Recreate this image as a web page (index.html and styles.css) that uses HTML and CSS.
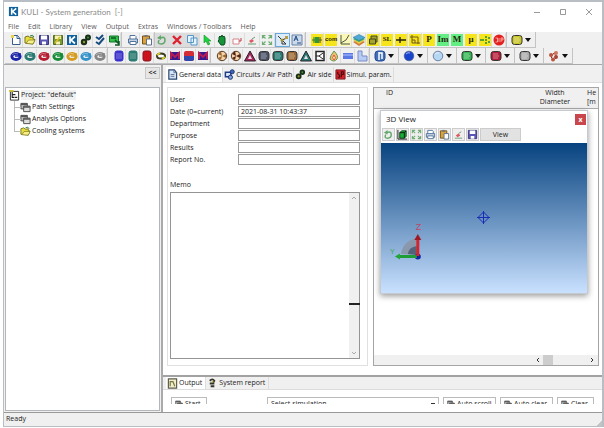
FILE: index.html
```html
<!DOCTYPE html>
<html lang="en">
<head>
<meta charset="utf-8">
<title>KULI - System generation</title>
<link rel="stylesheet" href="styles.css">
</head>
<body>
<svg class="defs" aria-hidden="true">
  <symbol id="logo" viewBox="0 0 12 12"><path fill="#10609c" d="M1 1h10v10H1z"/><path d="M4 2.500v7M9 2.500 5 6l4 3.500" fill="none" stroke="#fff" stroke-width="1.700"/></symbol>
  <symbol id="new" viewBox="0 0 12 12"><path d="M2.500 1.500h5l2.500 3v6H2.500z" fill="#fff" stroke="#345e8c"/><path d="M7 1.500v3h3" fill="none" stroke="#345e8c"/><path d="M1 1h3v3H1z" fill="#e8d34a"/></symbol>
  <symbol id="open" viewBox="0 0 12 12"><path d="M1 9V3l3-1 2 1.500 3-.5v2l2 .5L9 10z" fill="#e9df3c" stroke="#77741c"/><path d="M2 9.500 4.500 6H11L9 10z" fill="#f7f08a" stroke="#77741c" stroke-width=".7"/><path d="M6 2q3-2 4 1" stroke="#27823a" fill="none"/></symbol>
  <symbol id="save" viewBox="0 0 12 12"><path d="M1.500 1.500h9v9h-9z" fill="#5b55b4" stroke="#38367a"/><path d="M3 1.500h6v4H3zM4 7.500h4v3H4z" fill="#fff"/></symbol>
  <symbol id="saveas" viewBox="0 0 12 12"><path d="M1.500 1.500h9v9h-9z" fill="#7c9a35" stroke="#536a25"/><path d="M3 1.500h6v3.500H3zM4 7.500h4v3H4z" fill="#f4f3b5"/><path d="m3 9 5-6" stroke="#d9bf27" stroke-width="1.500"/></symbol>
  <symbol id="gears" viewBox="0 0 12 12"><circle cx="4" cy="8" r="2.200" fill="#849b22" stroke="#1d2c18" stroke-width="2"/><circle cx="8" cy="3.500" r="2" fill="#4b8c3c" stroke="#173018" stroke-width="2"/></symbol>
  <symbol id="check" viewBox="0 0 12 12"><path d="m2 3 3 2 4-4M2 8l3 2 5-6" fill="none" stroke="#164b80" stroke-width="2"/></symbol>
  <symbol id="run" viewBox="0 0 12 12"><path d="M1.500 2h9v6h-9z" fill="#35c04c" stroke="#12752a"/><path d="M3 4h5M7 6l4 4M11 7v4H7" fill="none" stroke="#085920" stroke-width="1.500"/></symbol>
  <symbol id="print" viewBox="0 0 12 12"><path d="M3 5V1.500h5l1 1V5" fill="#fff" stroke="#52749c"/><path d="M1.500 5h9v4h-9z" fill="#c5d2e2" stroke="#52749c"/><path d="M3 7.500h6v3H3z" fill="#fff" stroke="#52749c"/></symbol>
  <symbol id="paste" viewBox="0 0 12 12"><path d="M1.500 2h7v8h-7z" fill="#d8a33c" stroke="#78531b"/><path d="M3.500 1h3v2h-3z" fill="#777"/><path d="M5.500 5h5v6h-5z" fill="#fff" stroke="#5b718b"/></symbol>
  <symbol id="undo" viewBox="0 0 12 12"><path d="M4 4q5-2 5 2t-4 4-2-4" fill="none" stroke="#62a76c" stroke-width="1.600"/><path d="M1 4l4-3v5z" fill="#62a76c"/></symbol>
  <symbol id="del" viewBox="0 0 12 12"><path d="m2 2 8 8m0-8-8 8" stroke="#db2332" stroke-width="2.400"/></symbol>
  <symbol id="copy" viewBox="0 0 12 12"><path d="M1.500 1.500h6v7h-6zM5 4h6v7H5z" fill="#e6f4ff" stroke="#5797c6"/></symbol>
  <symbol id="arrow" viewBox="0 0 12 12"><path d="M3 1v8l2-2 2 4 2-1-2-3h3z" fill="#1bd33c" stroke="#15902c" stroke-width=".6"/></symbol>
  <symbol id="hand" viewBox="0 0 12 12"><path d="M3 6V3l1-1 1 1 1-2 1 2 1-1 1 2v5L8 11H5L2 7z" fill="#16933b" stroke="#08501d"/></symbol>
  <symbol id="zoom" viewBox="0 0 12 12"><path d="M2 5h6v5H2z" fill="#fff" stroke="#d6858c"/><path d="M8 7h2V4" fill="none" stroke="#bf3d47"/></symbol>
  <symbol id="erase" viewBox="0 0 12 12"><path d="m3 7 3-2 2 2-3 2z" fill="#de5960"/><path d="m6 5 3-2M2 10h8" stroke="#6b9c70"/></symbol>
  <symbol id="fit" viewBox="0 0 12 12"><path d="M1.500 4.500v-3h3m3 0h3v3m0 3v3h-3m-3 0h-3v-3M2 2l2.500 2.500M10 2 7.500 4.500M10 10 7.500 7.500M2 10l2.500-2.500" fill="none" stroke="#6fae73" stroke-width="1.200"/></symbol>
  <symbol id="net" viewBox="0 0 12 12"><path d="M0 0h12v12H0z" fill="#dcecf8"/><path d="m1 2 4 4 5-2M5 6l4 4H5z" fill="none" stroke="#333"/><circle cx="5" cy="6" r="1.500" fill="#a89026"/><path d="M8 2h3v3H8z" fill="#ba9c45"/></symbol>
  <symbol id="text" viewBox="0 0 12 12"><path d="M1 1h10v10H1z" fill="#cbd9ea" stroke="#6482a6"/><path d="m3 7 2-5 2 5M4 5h2M6 9h4" fill="none" stroke="#234e84"/></symbol>
  <symbol id="sig" viewBox="0 0 12 12"><path d="M0 0h12v12H0z" fill="#f6e51d"/><path d="M1 6h10M3 3v6" stroke="#34762d"/><path d="M4 3h4v6H4z" fill="#2b9938"/><path d="M9 3v6" stroke="#7b341b"/></symbol>
  <symbol id="graph" viewBox="0 0 12 12"><path d="M0 0h12v12H0z" fill="#fbf8b7"/><path d="M2 1v9h9M2 9q6-2 8-8" fill="none" stroke="#4b5741"/></symbol>
  <symbol id="layers" viewBox="0 0 12 12"><path d="m0 8 6 4 6-4-6-3z" fill="#d6793f"/><path d="m0 6 6 4 6-4-6-3z" fill="#e5ce3f"/><path d="m0 5 6 3 6-3-6-3z" fill="#3ba977"/><path d="m0 3.500 6 3 6-3L6 .5z" fill="#53a9d6" stroke="#287f9c" stroke-width=".6"/></symbol>
  <symbol id="box" viewBox="0 0 12 12"><path d="M0 0h12v12H0z" fill="#f6e51d"/><path d="M2.500 5h6v5h-6zM4 5V2h6v6H8" fill="#a9a32d" stroke="#3e4a26"/></symbol>
  <symbol id="plus" viewBox="0 0 12 12"><path d="M0 0h12v12H0z" fill="#f6e51d"/><path d="M1 6h10M5 3v6" stroke="#25230a" stroke-width="1.400"/></symbol>
  <symbol id="axes" viewBox="0 0 12 12"><path d="M0 0h12v12H0z" fill="#f6e51d"/><path d="M3 1v8h8M1 3h8v7M3 6h3v3" fill="none" stroke="#72581b"/></symbol>
  <symbol id="split" viewBox="0 0 12 12"><path d="M0 0h12v12H0z" fill="#f6e51d"/><path d="M1 6h4M7 2v2M7 5v2M7 8v2M10 3v2M10 7v2" stroke="#258e32" stroke-width="1.500"/></symbol>
  <symbol id="stop" viewBox="0 0 12 12"><circle cx="6" cy="6" r="5.500" fill="#e32020"/><path d="M2.500 4h2v4h-2M6 4v4M8 8V4h2v2H8" fill="none" stroke="#ffc1b5" stroke-width=".8"/></symbol>
  <symbol id="chip" viewBox="0 0 12 12"><rect x="1" y="1.500" width="10" height="9" rx="2.500" fill="currentColor" stroke="#373432"/><path d="M3 4h5M3 6h6M3 8h5" stroke="#fff" stroke-opacity=".45"/></symbol>
  <symbol id="blob" viewBox="0 0 12 12"><rect x="2" y="1" width="8" height="10" rx="2" fill="currentColor" stroke="currentColor"/><path d="M3 4h6M3 6h6M3 8h6" stroke="#fff" stroke-opacity=".35"/></symbol>
  <symbol id="solid" viewBox="0 0 12 12"><rect x="2" y="1" width="8" height="10" rx="2" fill="#cc141c" stroke="#84141c"/></symbol>
  <symbol id="ring" viewBox="0 0 12 12"><ellipse cx="6" cy="6.500" rx="4.200" ry="3" fill="#eee" stroke="currentColor" stroke-width="2.800"/><path d="M5 6h5V3" fill="none" stroke="currentColor" stroke-width="1.500"/><path d="M2 5q2-3 6-1" fill="none" stroke="#fff" stroke-opacity=".5" stroke-width=".8"/></symbol>
  <symbol id="loop" viewBox="0 0 12 12"><ellipse cx="6" cy="6" rx="4" ry="2.500" fill="#fff" stroke="#3a3926" stroke-width="2"/><path d="M2 5 5 3M7 9l3-2" stroke="#d9cb28" stroke-width="2"/></symbol>
  <symbol id="wave" viewBox="0 0 12 12"><path d="M1 2h10v8H1z" fill="#391a8a"/><path d="M2 9V3l4 4 4-4v6" fill="none" stroke="#bd1c53" stroke-width="1.800"/></symbol>
  <symbol id="bicolor" viewBox="0 0 12 12"><rect x="1" y="1" width="10" height="10" rx="2" fill="#d32b38"/><path d="M1 6h10v4l-2 1H3l-2-1z" fill="#3048ae"/></symbol>
  <symbol id="fan" viewBox="0 0 12 12"><circle cx="6" cy="6" r="4.700" fill="#f1d4a8" stroke="#553622"/><path d="M6 6 2 4l3-3zM6 6l4-2v4zM6 6l-1 4-3-2z" fill="currentColor"/></symbol>
  <symbol id="tri" viewBox="0 0 12 12"><path d="m6 1 5.500 10H.5z" fill="currentColor" stroke="#28202a"/><path d="m6 5 2 4H4z" fill="#eadde5"/></symbol>
  <symbol id="valve" viewBox="0 0 12 12"><path d="M2 1.500h8v9H2z" fill="#fff" stroke="#252525" stroke-width="1.500"/><path d="M2 6h3l4-3M5 6l4 3" fill="none" stroke="#252525"/></symbol>
  <symbol id="flame" viewBox="0 0 12 12"><path d="M6 1q5 5 3 8-3 4-7 0 0-3 4-8z" fill="#efbf76" stroke="#649950"/><path d="M6 5q3 3 0 5-3-2 0-5z" fill="#fff4b1" stroke="#dc5538"/></symbol>
  <symbol id="bar" viewBox="0 0 12 12"><path d="M1 3h10v6H1z" fill="#5b79e6"/><path d="M1 5h10" stroke="#b3c6ff"/></symbol>
  <symbol id="ell" viewBox="0 0 12 12"><path d="M2 1h4v5h5v5H2z" fill="#b8ccf6" stroke="#778cc1"/></symbol>
  <symbol id="pipe" viewBox="0 0 12 12"><rect x="1" y="1" width="10" height="10" rx="3" fill="#416fba" stroke="#244b91"/><path d="M5 2v8M5 3h3v6" stroke="#fff" fill="none" stroke-width="1.500"/></symbol>
  <symbol id="ball" viewBox="0 0 12 12"><circle cx="6" cy="6" r="4.800" fill="currentColor" stroke="#485c83" stroke-width=".7"/><path d="M3 4q2-2 4-1" fill="none" stroke="#fff" stroke-opacity=".6"/></symbol>
  <symbol id="cluster" viewBox="0 0 12 12"><path d="M3 7 6 3l3 4-3 3zM6 3l3-1" fill="none" stroke="#8e3326"/><circle cx="3" cy="5" r="2" fill="#bd563f"/><circle cx="8" cy="3" r="2" fill="#d17860"/><circle cx="8" cy="7" r="2" fill="#a54738"/><circle cx="5" cy="9.500" r="2" fill="#bd563f"/></symbol>
  <symbol id="page" viewBox="0 0 12 12"><path d="M2 1h6l2.500 3v7H2z" fill="#d9e5f4" stroke="#29466f" stroke-width="1.300"/><path d="M7.500 1v3h3M4 6h4M4 8h4" fill="none" stroke="#536f98"/></symbol>
  <symbol id="circuits" viewBox="0 0 12 12"><path d="M1.500 3.500h6v5h-6z" fill="#d7e7ff" stroke="#203c84" stroke-width="1.600"/><circle cx="9" cy="3" r="2.200" fill="#4265ba" stroke="#152e73"/><circle cx="7" cy="9" r="2.300" fill="#7f99d5" stroke="#152e73"/></symbol>
  <symbol id="sim" viewBox="0 0 12 12"><path d="M1 1h10v10H1z" fill="#d6212a" stroke="#7c1d22"/><path d="M3 3v2l2 2v2H3M7 9V3h2v3H7" fill="none" stroke="#4a0d10" stroke-width="1.300"/></symbol>
  <symbol id="project" viewBox="0 0 12 12"><path d="M1.500 1.500h9v9.500h-9z" fill="#fff" stroke="#222"/><path d="M3.500 2v6h2M4 5h3M6 8h3" stroke="#222" fill="none" stroke-width="1.200"/><path d="M0 0h5v2H0z" fill="#d8c536"/></symbol>
  <symbol id="windows" viewBox="0 0 12 12"><path d="M1 1.500h7v6H1z" fill="#bbb" stroke="#454545"/><path d="M4 4.500h7v6H4z" fill="#ddd" stroke="#454545"/><path d="M4 5.500h7M1 2.500h7" stroke="#555" stroke-width="1.500"/></symbol>
  <symbol id="report" viewBox="0 0 12 12"><path d="M3 3q3-3 5 0L6 6M4 9h4M3 6h5" fill="none" stroke="#34342c" stroke-width="2"/><path d="M5 4h2" stroke="#c4b956" stroke-width="2"/></symbol>
  <symbol id="out" viewBox="0 0 12 12"><path d="M1.500 1h9v10h-9z" fill="#f1edcb" stroke="#5d5d4f" stroke-width="1.300"/><path d="M3.500 9V4h3l2 5" fill="none" stroke="#777945" stroke-width="1.300"/></symbol>
  <symbol id="cube" viewBox="0 0 12 12"><path d="m3 4 2-2h5v6L8 10H3z" fill="#19ae36" stroke="#063b14"/><path d="M3 4h5v6M8 4l2-2M1 1v10h10" fill="none" stroke="#111"/></symbol>
</svg>

<div class="window">
  <header class="titlebar">
    <svg class="icon"><use href="#logo"/></svg>
    <h1>KULI - System generation&nbsp; [-]</h1>
    <div class="captions">
      <button type="button" aria-label="Minimize"><svg viewBox="0 0 8 8"><path d="M1 4.500h6"/></svg></button>
      <button type="button" aria-label="Maximize"><svg viewBox="0 0 8 8"><path d="M1.500 1.500h5v5h-5z"/></svg></button>
      <button type="button" aria-label="Close"><svg viewBox="0 0 8 8"><path d="m1 1 6 6m0-6L1 7"/></svg></button>
    </div>
  </header>
  <nav class="menubar">
    <button type="button">File</button><button type="button">Edit</button><button type="button">Library</button><button type="button">View</button><button type="button">Output</button><button type="button">Extras</button><button type="button">Windows / Toolbars</button><button type="button">Help</button>
  </nav>

  <div class="toolbars">
    <div class="toolrow">
      <div class="group">
        <button type="button" aria-label="New"><svg><use href="#new"/></svg></button>
        <button type="button" aria-label="Open"><svg><use href="#open"/></svg></button>
        <button type="button" aria-label="Save"><svg><use href="#save"/></svg></button>
        <button type="button" aria-label="Save as"><svg><use href="#saveas"/></svg></button>
        <button type="button" aria-label="KULI"><svg><use href="#logo"/></svg></button>
        <button type="button" aria-label="Components"><svg><use href="#gears"/></svg></button>
        <button type="button" aria-label="Check"><svg><use href="#check"/></svg></button>
        <button type="button" aria-label="Run"><svg><use href="#run"/></svg></button>
      </div>
      <div class="group">
        <button type="button" aria-label="Print"><svg><use href="#print"/></svg></button>
        <button type="button" aria-label="Paste"><svg><use href="#paste"/></svg></button>
      </div>
      <div class="group wide">
        <button type="button" aria-label="Undo" class="off"><svg><use href="#undo"/></svg></button>
        <button type="button" aria-label="Delete" class="off"><svg><use href="#del"/></svg></button>
        <button type="button" aria-label="Copy" class="off"><svg><use href="#copy"/></svg></button>
        <button type="button" aria-label="Select"><svg><use href="#arrow"/></svg></button>
        <button type="button" aria-label="Pan"><svg><use href="#hand"/></svg></button>
        <button type="button" aria-label="Zoom"><svg><use href="#zoom"/></svg></button>
        <button type="button" aria-label="Erase"><svg><use href="#erase"/></svg></button>
        <button type="button" aria-label="Fit"><svg><use href="#fit"/></svg></button>
        <button type="button" aria-label="Network" class="active"><svg><use href="#net"/></svg></button>
        <button type="button" aria-label="Text"><svg><use href="#text"/></svg></button>
      </div>
      <div class="group">
        <button type="button" aria-label="Signal"><svg><use href="#sig"/></svg></button>
        <button type="button" class="tag mono">com</button>
        <button type="button" aria-label="Graph"><svg><use href="#graph"/></svg></button>
        <button type="button" aria-label="Layers"><svg><use href="#layers"/></svg></button>
        <button type="button" aria-label="Box"><svg><use href="#box"/></svg></button>
        <button type="button" class="tag small">SL</button>
        <button type="button" aria-label="Add"><svg><use href="#plus"/></svg></button>
        <button type="button" aria-label="Axes"><svg><use href="#axes"/></svg></button>
        <button type="button" class="tag">P</button>
        <button type="button" class="tag green">Im</button>
        <button type="button" class="tag green">M</button>
        <button type="button" class="tag">μ</button>
        <button type="button" aria-label="Split"><svg><use href="#split"/></svg></button>
        <button type="button" aria-label="Stop"><svg><use href="#stop"/></svg></button>
      </div>
      <div class="group"><button type="button" aria-label="Control" class="drop c-yellow"><svg><use href="#chip"/></svg></button></div>
    </div>
    <div class="toolrow">
      <div class="group">
        <button type="button" aria-label="Blue circuit" class="c-blue"><svg><use href="#ring"/></svg></button>
        <button type="button" aria-label="Teal circuit" class="c-teal"><svg><use href="#ring"/></svg></button>
        <button type="button" aria-label="Red circuit" class="c-red"><svg><use href="#ring"/></svg></button>
        <button type="button" aria-label="Green circuit" class="c-green"><svg><use href="#ring"/></svg></button>
        <button type="button" aria-label="Orange circuit" class="c-orange"><svg><use href="#ring"/></svg></button>
        <button type="button" aria-label="Sky circuit" class="c-sky"><svg><use href="#ring"/></svg></button>
        <button type="button" aria-label="Gray circuit" class="c-gray"><svg><use href="#ring"/></svg></button>
      </div>
      <div class="group">
        <button type="button" aria-label="Radiator" class="c-violet"><svg><use href="#blob"/></svg></button>
        <button type="button" aria-label="Cooler" class="c-teal"><svg><use href="#blob"/></svg></button>
        <button type="button" aria-label="Heater"><svg><use href="#solid"/></svg></button>
        <button type="button" aria-label="Loop"><svg><use href="#loop"/></svg></button>
        <button type="button" aria-label="Condenser"><svg><use href="#wave"/></svg></button>
        <button type="button" aria-label="Exchanger"><svg><use href="#bicolor"/></svg></button>
        <button type="button" aria-label="Evaporator"><svg><use href="#wave"/></svg></button>
      </div>
      <div class="group">
        <button type="button" aria-label="Fan" class="c-brown"><svg><use href="#fan"/></svg></button>
        <button type="button" aria-label="Mechanical fan" class="c-dark"><svg><use href="#fan"/></svg></button>
        <button type="button" aria-label="Resistance" class="c-plum"><svg><use href="#tri"/></svg></button>
        <button type="button" aria-label="Block" class="c-slate"><svg><use href="#chip"/></svg></button>
        <button type="button" aria-label="Pump" class="c-teal"><svg><use href="#chip"/></svg></button>
        <button type="button" aria-label="Motor" class="c-brown"><svg><use href="#chip"/></svg></button>
        <button type="button" aria-label="Nozzle" class="c-teal"><svg><use href="#tri"/></svg></button>
        <button type="button" aria-label="Valve"><svg><use href="#valve"/></svg></button>
        <button type="button" aria-label="Burner"><svg><use href="#flame"/></svg></button>
        <button type="button" aria-label="Duct"><svg><use href="#bar"/></svg></button>
        <button type="button" aria-label="Elbow"><svg><use href="#ell"/></svg></button>
      </div>
      <div class="group"><button type="button" aria-label="Pipe" class="drop"><svg><use href="#pipe"/></svg></button></div>
      <div class="group"><button type="button" aria-label="Fluid" class="drop c-royal"><svg><use href="#ball"/></svg></button></div>
      <div class="group"><button type="button" aria-label="Air" class="drop c-pale"><svg><use href="#ball"/></svg></button></div>
      <div class="group"><button type="button" aria-label="Sensor" class="drop c-lime"><svg><use href="#chip"/></svg></button></div>
      <div class="group"><button type="button" aria-label="Engine" class="drop c-crimson"><svg><use href="#chip"/></svg></button></div>
      <div class="group"><button type="button" aria-label="Cabin" class="drop c-silver"><svg><use href="#chip"/></svg></button></div>
      <div class="group"><button type="button" aria-label="Cluster" class="drop"><svg><use href="#cluster"/></svg></button></div>
    </div>
  </div>

  <div class="workspace">
    <aside class="sidebar">
      <div class="sidehead"><button type="button">&lt;&lt;</button></div>
      <div class="tree">
        <div class="node"><svg class="icon"><use href="#project"/></svg><span class="selected">Project: "default"</span></div>
        <ul>
          <li class="node"><svg class="icon"><use href="#windows"/></svg>Path Settings</li>
          <li class="node"><svg class="icon"><use href="#windows"/></svg>Analysis Options</li>
          <li class="node"><svg class="icon"><use href="#open"/></svg>Cooling systems</li>
        </ul>
      </div>
    </aside>

    <main class="main">
      <div class="tabs">
        <button type="button" class="tab current"><svg class="icon"><use href="#page"/></svg>General data</button>
        <button type="button" class="tab"><svg class="icon"><use href="#circuits"/></svg>Circuits / Air Path</button>
        <button type="button" class="tab"><svg class="icon"><use href="#gears"/></svg>Air side</button>
        <button type="button" class="tab"><svg class="icon"><use href="#sim"/></svg>Simul. param.</button>
      </div>
      <div class="panes">
        <form class="general">
          <div class="fields">
            <label for="user">User</label><input id="user" type="text">
            <label for="date">Date (0=current)</label><input id="date" type="text" value="2021-08-31 10:43:37">
            <label for="dept">Department</label><input id="dept" type="text">
            <label for="purpose">Purpose</label><input id="purpose" type="text">
            <label for="results">Results</label><input id="results" type="text">
            <label for="report-no">Report No.</label><input id="report-no" type="text">
          </div>
          <label class="memolabel" for="memo">Memo</label>
          <div class="memo">
            <textarea id="memo"></textarea>
            <div class="vscroll">
              <svg viewBox="0 0 6 4"><path d="m1 3 2-2 2 2"/></svg>
              <span class="mark"></span>
              <svg viewBox="0 0 6 4"><path d="m1 1 2 2 2-2"/></svg>
            </div>
          </div>
        </form>

        <section class="list">
          <table>
            <thead><tr><th class="id">ID</th><th class="width">Width<br>Diameter</th><th class="height">He<br>[m</th></tr></thead>
          </table>
          <div class="hscroll">
            <svg viewBox="0 0 4 6"><path d="M3 1 1 3l2 2"/></svg><span class="thumb"></span><svg class="right" viewBox="0 0 4 6"><path d="m1 1 2 2-2 2"/></svg>
          </div>
          <div class="view3d">
            <div class="viewtitle"><h2>3D View</h2><button type="button" aria-label="Close 3D View">x</button></div>
            <div class="viewtools">
              <button type="button" aria-label="Reset"><svg><use href="#undo"/></svg></button>
              <button type="button" aria-label="Cube"><svg><use href="#cube"/></svg></button>
              <button type="button" aria-label="Fit view"><svg><use href="#fit"/></svg></button>
              <button type="button" aria-label="Print view"><svg><use href="#print"/></svg></button>
              <button type="button" aria-label="Copy view"><svg><use href="#paste"/></svg></button>
              <button type="button" aria-label="Erase view"><svg><use href="#erase"/></svg></button>
              <button type="button" aria-label="Save view"><svg><use href="#save"/></svg></button>
              <button type="button" class="viewbtn">View</button>
            </div>
            <svg class="scene" viewBox="0 0 207 150" preserveAspectRatio="none">
              <defs><linearGradient id="sky" x2="0" y2="1"><stop stop-color="#07437f"/><stop offset=".5" stop-color="#6690be"/><stop offset="1" stop-color="#c9e1ff"/></linearGradient></defs>
              <path d="M0 0h207v150H0z" fill="url(#sky)"/>
              <path d="m103 69 5.500 5.500-5.500 5.500-5.500-5.500zM103 68v13M96.500 74.500h13" fill="none" stroke="#182cb4"/>
              <path d="M20 111q2-13 16-16v17z" fill="#8998ad"/>
              <path d="M27 111q1-7 9-8v9z" fill="#56627a"/>
              <circle cx="37" cy="113.500" r="3" fill="#1724a8"/>
              <path d="M19 113.500h17" stroke="#1e9c35" stroke-width="3"/><path d="m14 113.500 5-3v6z" fill="#20a638"/>
              <path d="M37 113V96" stroke="#d6242d" stroke-width="3"/><path d="m37 91-3.500 6h7z" fill="#9e1a25"/>
              <text x="35" y="87" class="z">Z</text><text x="9" y="111" class="y">Y</text>
            </svg>
          </div>
        </section>
      </div>

      <section class="output">
        <div class="tabs">
          <button type="button" class="tab current"><svg class="icon"><use href="#out"/></svg>Output</button>
          <button type="button" class="tab"><svg class="icon"><use href="#report"/></svg>System report</button>
        </div>
        <div class="controls">
          <button type="button" class="start"><svg class="icon"><use href="#windows"/></svg>Start</button>
          <select aria-label="Simulation"><option>Select simulation</option></select>
          <button type="button" class="auto"><svg class="icon"><use href="#windows"/></svg>Auto scroll</button>
          <button type="button" class="auto"><svg class="icon"><use href="#windows"/></svg>Auto clear</button>
          <button type="button" class="clear"><svg class="icon"><use href="#windows"/></svg>Clear</button>
        </div>
      </section>
    </main>
  </div>

  <footer class="status">Ready</footer>
</div>
</body>
</html>
```

FILE: styles.css
```css
* { box-sizing: border-box; }
body { margin: 0; background: #fff; color: #222; font: 7px/10px "Open Sans", "Noto Sans", sans-serif; }
button, input, select, textarea { margin: 0; padding: 0; border: 0; border-radius: 0; background: none; color: inherit; font: inherit; }
h1, h2, ul { margin: 0; padding: 0; font: inherit; list-style: none; }
svg { display: block; }
.defs { position: absolute; width: 0; height: 0; }
.icon { width: 11px; height: 11px; flex: none; }

.window { display: flex; flex-direction: column; height: calc(100vh - 1px); border: solid #b9bec4; border-width: 2px 2px 1px 1px; margin-left: 3px; overflow: hidden; }

.titlebar { display: flex; align-items: center; gap: 2px; height: 19px; padding-left: 4px; color: #8b8b8b; font: 8px/10px Lato, sans-serif; flex: none; }
.captions { display: flex; gap: 18px; margin-left: auto; padding-right: 9px; }
.captions svg { width: 8px; height: 8px; fill: none; stroke: #999; }
.menubar { display: flex; gap: 9px; height: 11px; padding-left: 4px; color: #5c5c5c; flex: none; }

.toolbars { padding-left: 1px; background: #f0f0f0; border-bottom: 1px solid #a8a8a8; flex: none; }
.toolrow { display: flex; height: 16px; }
.group { display: flex; align-items: center; padding: 0 0 0 4px; border: solid #c3c3c3; border-width: 0 1px 1px 0; background: #f0f0f0; }
.group button { display: grid; place-items: center; width: 14px; height: 14px; border-right: 1px solid #ddd; }
.group svg { width: 12px; height: 12px; }
.group.wide { padding-left: 0; }
.group.wide button { width: 15px; }
.group .off { background: #dcdcdc; }
.group .active { background: #cfe6f8; border: 1px solid #6aa9da; }
.group .tag { background: #f6e51d; border: 1px solid #f0f0f0; color: #28260c; font: bold 9px/11px "Liberation Serif", serif; }
.group .tag.green { background: #63ee83; }
.group .tag.small { font-size: 7px; }
.group .tag.mono { font: bold 6px/11px "Liberation Sans", sans-serif; }
.group .drop { display: flex; align-items: center; gap: 2px; width: 24px; border: 0; }
.drop svg { flex: none; }
.drop::after { content: ""; border: 3px solid transparent; border-top: 4px solid #111; border-bottom: 0; }
.c-blue { color: #1b25a8; } .c-teal { color: #287a72; } .c-red { color: #b51c32; } .c-green { color: #168c36; }
.c-orange { color: #d69a1d; } .c-sky { color: #3293ca; } .c-gray { color: #858585; } .c-violet { color: #3b31cc; }
.c-brown { color: #9b6732; } .c-dark { color: #572015; } .c-plum { color: #a8265b; } .c-slate { color: #4a5368; }
.c-royal { color: #1944d0; } .c-pale { color: #b5d7f3; } .c-lime { color: #32b653; } .c-crimson { color: #b41d38; }
.c-silver { color: #aaa; } .c-yellow { color: #c9c52b; }

.workspace { display: flex; flex: 1; min-height: 0; background: #f0f0f0; }
.sidebar { display: flex; flex-direction: column; width: 159px; padding: 2px 1px 1px; border-right: 2px solid #aaa; flex: none; }
.sidehead { display: flex; justify-content: flex-end; height: 20px; }
.sidehead button { width: 15px; height: 12px; border: 1px solid #c8c8c8; background: #e6e6e6; line-height: 8px; font-weight: bold; }
.tree { flex: 1; padding: 1px 3px; border: 1px solid #b3b6bb; background: #fff; }
.node { display: flex; align-items: center; gap: 1px; height: 12px; }
.tree ul { margin-left: 5px; }
.tree li { position: relative; padding-left: 6px; }
.tree li::before { content: ""; position: absolute; left: 0; top: 0; width: 6px; height: 6px; border: solid #bbb; border-width: 0 0 1px 1px; }
.tree li:not(:last-child)::after { content: ""; position: absolute; left: 0; top: 0; height: 12px; border-left: 1px solid #bbb; }
.selected { background: #f1f1f1; }

.main { display: flex; flex-direction: column; flex: 1; min-width: 0; background: #fff; }
.tabs { display: flex; height: 18px; padding: 2px 0 0 3px; background: #f0f0f0; border-bottom: 1px solid #ddd; flex: none; }
.tab { display: flex; align-items: center; gap: 1px; padding: 0 1px; border-right: 1px solid #ddd; white-space: nowrap; }
.tab.current { background: #fff; }
.panes { display: flex; gap: 5px; flex: 1; min-height: 0; padding: 4px 3px 9px 4px; }
.general { display: flex; flex-direction: column; width: 201px; padding: 6px 7px 6px 2px; border: 1px solid #e0e0e0; flex: none; }
.fields { display: grid; grid-template-columns: 68px 1fr; row-gap: 1px; align-items: center; }
.fields label { white-space: nowrap; }
.fields input { width: 100%; height: 11px; padding: 0 2px; border: 1px solid #9a9a9a; background: #fff; line-height: 9px; }
.memolabel { margin: 15px 0 2px; }
.memo { display: flex; flex: 1; border: 1px solid #949494; }
.memo textarea { flex: 1; min-width: 0; resize: none; }
.vscroll { display: flex; flex-direction: column; align-items: center; justify-content: space-between; width: 10px; padding: 3px 0; background: #f0f0f0; }
.vscroll svg { width: 6px; height: 4px; fill: none; stroke: #aaa; }
.mark { width: 11px; height: 2px; margin-top: 57px; background: #222; }

.list { position: relative; display: flex; flex-direction: column; flex: 1; min-width: 0; border: 1px solid #a5a5a5; overflow: hidden; }
table { width: 100%; border-collapse: collapse; table-layout: fixed; background: #f0f0f0; border-bottom: 1px solid #aaa; }
th { height: 20px; padding: 0; font-weight: normal; line-height: 9px; vertical-align: top; white-space: nowrap; }
.id { padding-left: 12px; text-align: left; }
.width { width: 64px; }
.height { width: 11px; text-align: left; }
.hscroll { display: flex; align-items: center; justify-content: flex-end; gap: 3px; height: 10px; margin-top: auto; padding-right: 4px; background: #f0f0f0; }
.hscroll svg { width: 4px; height: 6px; fill: none; stroke: #333; }
.thumb { width: 10px; height: 10px; background: #cdcdcd; }
.hscroll .right { margin-left: 34px; }

.view3d { position: absolute; left: 6px; right: 10px; top: 22px; bottom: 71px; display: flex; flex-direction: column; border: 1px solid #c5cad0; background: #fff; box-shadow: 0 2px 6px #0006; }
.viewtitle { display: flex; align-items: center; justify-content: space-between; height: 16px; padding: 0 1px 0 5px; font-size: 8px; flex: none; }
.viewtitle button { width: 11px; height: 11px; background: #c9474c; color: #fff; font-weight: bold; font-size: 7px; line-height: 9px; }
.viewtools { display: flex; gap: 1px; height: 16px; padding: 1px 1px 2px; flex: none; }
.viewtools button { display: grid; place-items: center; width: 13px; height: 13px; border: 1px solid #ccc; background: #eee; }
.viewtools svg { width: 11px; height: 11px; }
.viewtools .viewbtn { width: 41px; background: #e2e2e2; }
.scene { width: 100%; flex: 1; min-height: 0; }
.z, .y { font: 9px "Liberation Sans", sans-serif; fill: #c04664; }
.y { fill: #35a956; font-size: 7px; }

.output { border-top: 2px solid #a2a2a2; flex: none; }
.output .tabs { height: 13px; padding-top: 0; }
.output .tab { padding: 0 3px 0 1px; }
.controls { display: flex; gap: 4px; height: 14px; margin-bottom: 8px; padding: 7px 8px 0; overflow: hidden; }
.controls > * { display: flex; align-items: center; gap: 2px; height: 14px; padding: 0 3px; border: 1px solid #bbb; flex: none; white-space: nowrap; }
.controls .icon { width: 8px; height: 8px; }
.controls .start { width: 36px; margin-right: 56px; }
.controls select { flex: 1; appearance: none; background: linear-gradient(#333, #333) right 3px top 5px / 4px 2px no-repeat; }
.auto { width: 53px; }
.clear { width: 37px; }

.status { height: 14px; padding: 1px 0 0 2px; border-top: 1px solid #999; background: linear-gradient(135deg, transparent 50%, #c4c4c4 50%) right bottom / 6px 6px no-repeat #f0f0f0; flex: none; }
```
